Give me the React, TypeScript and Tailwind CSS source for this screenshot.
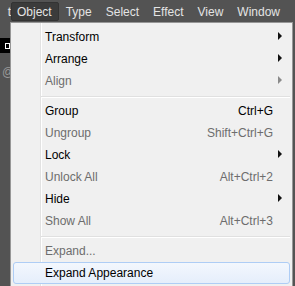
import React from 'react';

type Item =
    | { kind: 'item'; label: string; shortcut?: string; sub?: boolean; disabled?: boolean; active?: boolean }
    | { kind: 'sep' };

const items: Item[] = [
    { kind: 'item', label: 'Transform', sub: true },
    { kind: 'item', label: 'Arrange', sub: true },
    { kind: 'item', label: 'Align', sub: true, disabled: true },
    { kind: 'sep' },
    { kind: 'item', label: 'Group', shortcut: 'Ctrl+G' },
    { kind: 'item', label: 'Ungroup', shortcut: 'Shift+Ctrl+G', disabled: true },
    { kind: 'item', label: 'Lock', sub: true },
    { kind: 'item', label: 'Unlock All', shortcut: 'Alt+Ctrl+2', disabled: true },
    { kind: 'item', label: 'Hide', sub: true },
    { kind: 'item', label: 'Show All', shortcut: 'Alt+Ctrl+3', disabled: true },
    { kind: 'sep' },
    { kind: 'item', label: 'Expand...', disabled: true },
    { kind: 'item', label: 'Expand Appearance', active: true },
];

const menuBar = ['Object', 'Type', 'Select', 'Effect', 'View', 'Window'];

function Arrow({ disabled }: { disabled?: boolean }) {
    return (
        <svg width="5" height="8" viewBox="0 0 5 8" className="block">
            <path d="M0 0 L4 4 L0 8 Z" fill={disabled ? '#8a8a8a' : '#111'} />
        </svg>
    );
}

export default function App() {
    return (
        <div className="relative w-[295px] h-[286px] overflow-hidden bg-[#535353] font-['Liberation_Sans',Arial,sans-serif] text-[12px]">
            {/* menu bar */}
            <div className="flex items-center h-[23px] text-[#e4e4e4]">
                <span className="w-[11px] pl-[1px] overflow-hidden whitespace-nowrap flex justify-end">t</span>
                {menuBar.map((name) => (
                    <span
                        key={name}
                        className={
                            name === 'Object'
                                ? 'h-[19px] flex items-center pl-[5px] pr-[6px] rounded-[2px] bg-[#3b3b3b] border border-[#333]'
                                : 'h-[19px] flex items-center px-[7px]'
                        }
                    >
                        {name}
                    </span>
                ))}
            </div>

            {/* tool panel under the menu */}
            <div className="flex flex-col w-[10px]">
                <div className="h-[15px]" />
                <div className="h-[15px] bg-black flex items-center pl-[5px]">
                    <div className="w-[6px] h-[6px] border border-white" />
                </div>
                <div className="h-[10px]" />
                <div className="h-[18px] text-[#9a9a9a] pl-[2px] leading-[18px]">@</div>
            </div>

            {/* dropdown */}
            <div className="absolute left-[10px] top-[22px] w-[283px] h-[280px] bg-[#f0f0f0] border-l border-t border-r border-[#979797] pt-[2px]">
                <div className="absolute left-[29px] top-0 bottom-0 w-px bg-[#e2e2e2]" />
                <div className="absolute left-[30px] top-0 bottom-0 w-px bg-white" />
                {items.map((it, i) =>
                    it.kind === 'sep' ? (
                        <div key={i} className="relative h-[8px] pt-[5px] pl-[30px] pr-[2px]">
                            <div className="h-px bg-[#e0e0e0]" />
                            <div className="h-px bg-white" />
                        </div>
                    ) : (
                        <div key={i} className="relative flex items-center h-[22px] pl-[34px]">
                            {it.active && (
                                <div className="absolute left-[2px] right-[2px] top-[1px] bottom-[-1px] rounded-[3px] border border-[#aecdf5] bg-gradient-to-b from-[#f3f7fd] to-[#e5eefb]" />
                            )}
                            <span className={`relative flex-1 pt-[1px] ${it.disabled ? 'text-[#6d6d6d]' : 'text-black'}`}>{it.label}</span>
                            <span className={`relative pt-[1px] ${it.disabled ? 'text-[#6d6d6d]' : 'text-black'}`}>{it.shortcut}</span>
                            <span className="relative w-[19px] pl-[5px] flex items-center">
                                {it.sub && <Arrow disabled={it.disabled} />}
                            </span>
                        </div>
                    ),
                )}
            </div>
        </div>
    );
}
